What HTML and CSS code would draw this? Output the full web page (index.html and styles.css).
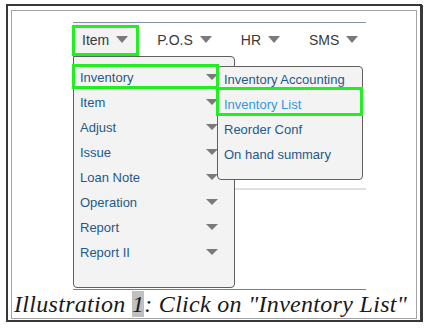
FILE: index.html
```html
<!DOCTYPE html>
<html>
<head>
<meta charset="utf-8">
<link rel="stylesheet" href="styles.css">
</head>
<body>
<div class="frame">
  <div class="inner">
    <div class="app">
      <nav class="nav">
        <div class="nav-item active">Item<span class="caret"></span></div>
        <div class="nav-item">P.O.S<span class="caret"></span></div>
        <div class="nav-item">HR<span class="caret"></span></div>
        <div class="nav-item">SMS<span class="caret"></span></div>
      </nav>
      <div class="page"><div class="rule"></div></div>
      <ul class="menu">
        <li>Inventory<span class="caret small"></span></li>
        <li>Item<span class="caret small"></span></li>
        <li>Adjust<span class="caret small"></span></li>
        <li>Issue<span class="caret small"></span></li>
        <li>Loan Note<span class="caret small"></span></li>
        <li>Operation<span class="caret small"></span></li>
        <li>Report<span class="caret small"></span></li>
        <li>Report II<span class="caret small"></span></li>
      </ul>
      <ul class="submenu">
        <li>Inventory Accounting</li>
        <li class="hover">Inventory List</li>
        <li>Reorder Conf</li>
        <li>On hand summary</li>
      </ul>
      <div class="hl hl-tab"></div>
      <div class="hl hl-inv"></div>
      <div class="hl hl-list"></div>
    </div>
    <p class="caption">Illustration <span class="num">1</span>: Click on "Inventory List"</p>
  </div>
</div>
</body>
</html>
```
FILE: styles.css
```css
* { box-sizing: border-box; }
html, body { margin: 0; padding: 0; background: #fff; }
body { font-family: "Liberation Sans", Arial, sans-serif; }

.frame {
  margin: 4px 0 0 6px;
  width: 416px;
  height: 318px;
  border: 2px solid #383838;
  box-shadow: 1px 1px 0 #383838;
  padding: 4px 0 0 3px;
}
.inner {
  width: 406px;
  height: 309px;
  border: 1px solid #a3a3a3;
  padding-top: 11px;
}
.app {
  position: relative;
  margin: 0 0 0 61px;
  width: 293px;
  border-top: 1px solid #8393a3;
}
.nav {
  display: flex;
  gap: 11px;
  height: 33px;
}
.nav-item {
  display: flex;
  align-items: center;
  gap: 7px;
  padding: 0 9px;
  font-size: 14px;
  color: #3a3a3a;
}
.nav-item.active { background: #f3f3f3; }
.caret {
  width: 0;
  height: 0;
  border-left: 6px solid transparent;
  border-right: 6px solid transparent;
  border-top: 7px solid #7a7a7a;
}
.caret.small {
  border-left-width: 6px;
  border-right-width: 6px;
  border-top-width: 6px;
  margin-top: -2px;
}
.page {
  height: 234px;
  padding-top: 132px;
  border-bottom: 1px solid #5b86b8;
}
.rule {
  height: 2px;
  background: #e0e0e0;
}
.menu, .submenu {
  list-style: none;
  margin: 0;
  position: absolute;
  background: #f3f3f3;
  border: 1px solid #606060;
  font-size: 13px;
  color: #1d5a89;
}
.menu {
  left: 0;
  top: 33px;
  width: 162px;
  height: 232px;
  padding: 8px 16px 0 6px;
  border-radius: 0 4px 4px 4px;
}
.menu li {
  display: flex;
  justify-content: space-between;
  align-items: center;
  height: 25px;
}
.submenu {
  left: 144px;
  top: 43px;
  width: 146px;
  height: 114px;
  padding: 0 0 0 6px;
  border-radius: 4px;
}
.submenu li {
  height: 25px;
  line-height: 25px;
  white-space: nowrap;
}
.submenu li.hover { color: #3498db; }
.hl {
  position: absolute;
  border: 3px solid #22ee22;
}
.hl-tab { left: -1px; top: 2px; width: 67px; height: 31px; }
.hl-inv { left: -1px; top: 41px; width: 147px; height: 25px; }
.hl-list { left: 143px; top: 64px; width: 147px; height: 29px; }

.caption {
  margin: 0;
  padding-left: 2px;
  font-family: "Liberation Serif", "Times New Roman", serif;
  font-style: italic;
  font-size: 24px;
  line-height: 28px;
  letter-spacing: 0.3px;
  color: #1a1a1a;
  white-space: nowrap;
}
.num { background: #c0c0c0; }
```
